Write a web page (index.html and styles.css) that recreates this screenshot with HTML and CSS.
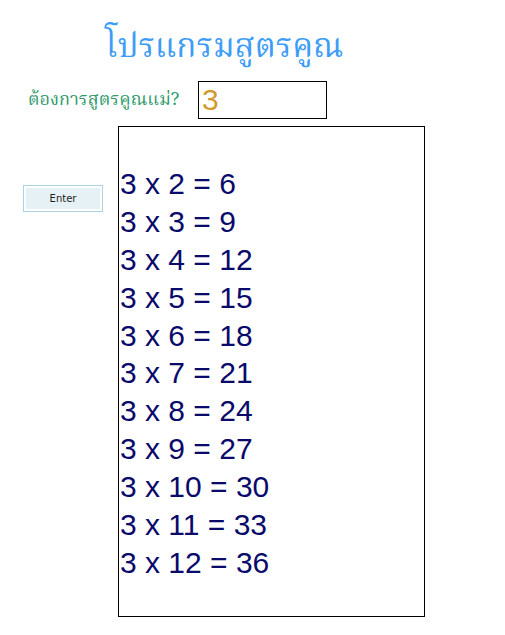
FILE: index.html
```html
<!DOCTYPE html>
<html lang="th">
<head>
<meta charset="utf-8">
<title>โปรแกรมสูตรคูณ</title>
<link rel="stylesheet" href="styles.css">
</head>
<body>
<h1 class="title">โปรแกรมสูตรคูณ</h1>
<div class="ask-row">
  <label class="ask" for="num">ต้องการสูตรคูณแม่?</label>
  <div class="num-box" id="num">3</div>
</div>
<div class="main-row">
  <div class="side">
    <button class="enter" type="button">Enter</button>
  </div>
  <div class="output">
    <br>
    3 x 2 = 6<br>
    3 x 3 = 9<br>
    3 x 4 = 12<br>
    3 x 5 = 15<br>
    3 x 6 = 18<br>
    3 x 7 = 21<br>
    3 x 8 = 24<br>
    3 x 9 = 27<br>
    3 x 10 = 30<br>
    3 x 11 = 33<br>
    3 x 12 = 36
  </div>
</div>
</body>
</html>
```

FILE: styles.css
```css
html, body {
  margin: 0;
  padding: 0;
  background: #ffffff;
}
body {
  width: 505px;
  height: 635px;
  overflow: hidden;
  font-family: "Noto Serif Thai", "Noto Sans Thai", "DejaVu Sans", serif;
}
.title {
  margin: 0;
  padding: 25px 0 0 105px;
  font-size: 33px;
  font-weight: normal;
  line-height: 47px;
  color: #3d9cf7;
}
.ask-row {
  display: flex;
  align-items: center;
  margin-top: 9px;
}
.ask {
  width: 170px;
  padding-left: 28px;
  font-size: 18px;
  color: #2e9a6c;
}
.num-box {
  box-sizing: border-box;
  width: 129px;
  height: 38px;
  border: 1px solid #000;
  padding-left: 3px;
  font-family: "Liberation Sans", Arial, sans-serif;
  font-size: 30px;
  line-height: 36px;
  color: #d19a2c;
}
.main-row {
  display: flex;
  margin-top: 7px;
}
.side {
  box-sizing: border-box;
  width: 118px;
  padding: 59px 0 0 23px;
}
.enter {
  box-sizing: border-box;
  display: block;
  width: 80px;
  height: 27px;
  margin: 0;
  padding: 0;
  border: 1px solid #a8d4e6;
  background: #e6f1f5;
  box-shadow: inset 0 0 0 2px #fff;
  font-family: "DejaVu Sans", sans-serif;
  font-size: 10px;
  color: #222;
}
.output {
  box-sizing: border-box;
  width: 307px;
  height: 491px;
  border: 1px solid #000;
  padding-left: 1px;
  font-family: "Liberation Sans", Arial, sans-serif;
  font-size: 30px;
  line-height: 37.9px;
  color: #0a0a6b;
}
```
